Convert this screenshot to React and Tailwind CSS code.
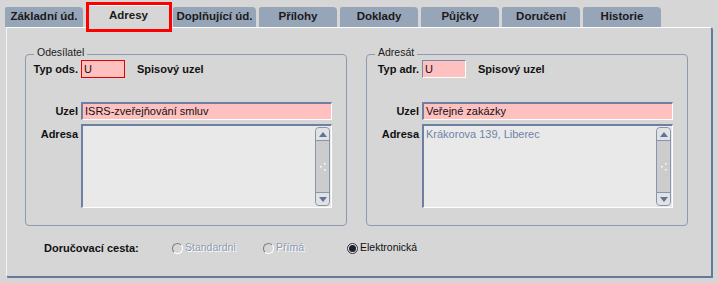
import React from 'react'

const tabs = [
  { label: 'Základní úd.', w: 'w-[78px]' },
  { label: 'Adresy', w: 'w-[84px]', active: true },
  { label: 'Doplňující úd.', w: 'w-[83px]' },
  { label: 'Přílohy', w: 'w-[78px]' },
  { label: 'Doklady', w: 'w-[78px]' },
  { label: 'Půjčky', w: 'w-[78px]' },
  { label: 'Doručení', w: 'w-[78px]' },
  { label: 'Historie', w: 'w-[78px]' },
]

function Tab({ label, w, active }) {
  if (active) {
    return (
      <div className={`${w} h-[23px] -mb-[1px] pb-[2px] flex items-center justify-center bg-[#d6d6d6] border-t border-l border-white rounded-t-[3px] text-[11.5px] font-bold text-[#1a1a1a] relative z-10`}>
        {label}
      </div>
    )
  }
  return (
    <div className={`${w} h-[20px] flex items-center justify-center bg-[#97a5b8] rounded-tr-[4px] rounded-tl-[2px] text-[11.5px] font-bold text-[#1a1a1a]`}>
      {label}
    </div>
  )
}

// svislý posuvník textového pole
function ScrollBar() {
  return (
    <div className="w-[15px] h-full flex flex-col border border-[#8595b0] rounded-[4px] bg-[#cfcfcf] overflow-hidden">
      <div className="h-[13px] flex items-center justify-center bg-[#e2e2e2] border-b border-[#8595b0] rounded-t-[3px]">
        <svg width="8" height="5" viewBox="0 0 8 5"><path d="M0 5 L4 0 L8 5 Z" fill="#5f7498" /></svg>
      </div>
      <div className="flex-1 flex items-center justify-center bg-[#cccccc]">
        <svg width="6" height="8" viewBox="0 0 6 8">
          <rect x="4" y="0" width="1.5" height="1.5" fill="#fff" />
          <rect x="0" y="3" width="1.5" height="1.5" fill="#fff" />
          <rect x="4" y="6" width="1.5" height="1.5" fill="#fff" />
        </svg>
      </div>
      <div className="h-[13px] flex items-center justify-center bg-[#e2e2e2] border-t border-[#8595b0] rounded-b-[3px]">
        <svg width="8" height="5" viewBox="0 0 8 5"><path d="M0 0 L8 0 L4 5 Z" fill="#5f7498" /></svg>
      </div>
    </div>
  )
}

function AddressBox({ title, typLabel, typRed, uzel, adresa }) {
  return (
    <div className="relative w-[322px] h-[172px] border border-[#8d9bb0] rounded-[4px] pt-[5px]">
      <span className="absolute -top-[10px] left-[8px] px-[3px] bg-[#d6d6d6] text-[10.5px] leading-[14px] text-[#1a1a1a]">
        {title}
      </span>
      <div className="flex items-center h-[18px]">
        <div className="w-[52px] text-right text-[11px] font-bold text-[#111]">{typLabel}</div>
        <div
          className={`ml-[3px] w-[44px] h-[18px] bg-[#ffc0c0] text-[11px] leading-[16px] pl-[2px] text-[#111] ${
            typRed ? 'border border-[#e00000]' : 'border border-t-[#7788a6] border-l-[#7788a6] border-b-white border-r-white'
          }`}
        >
          U
        </div>
        <div className="ml-[12px] text-[11px] font-bold text-[#111]">Spisový uzel</div>
      </div>
      <div className="flex items-center h-[18px] mt-[24px]">
        <div className="w-[52px] text-right text-[11px] font-bold text-[#111]">Uzel</div>
        <div className="ml-[3px] w-[251px] h-[18px] bg-[#ffc0c0] border-t-2 border-l-2 border-b border-r border-t-[#6d80a2] border-l-[#6d80a2] border-b-white border-r-white text-[11px] leading-[14px] pl-[2px] text-[#111]">
          {uzel}
        </div>
      </div>
      <div className="flex items-start mt-[4px]">
        <div className="w-[52px] text-right text-[11px] font-bold text-[#111] mt-[2px]">Adresa</div>
        <div className="ml-[3px] w-[251px] h-[84px] flex bg-[#e9e9e9] border-t-2 border-l-2 border-b border-r border-t-[#6d80a2] border-l-[#6d80a2] border-b-white border-r-white">
          <div className="flex-1 text-[11px] leading-[15px] pl-[2px] pt-[1px] text-[#6f83a8]">{adresa}</div>
          <div className="py-[1px] pr-[1px]">
            <ScrollBar />
          </div>
        </div>
      </div>
    </div>
  )
}

function Radio({ label, checked, disabled, w }) {
  return (
    <div className={`${w} flex items-center`}>
      <div
        className={`w-[11px] h-[11px] rounded-full flex items-center justify-center border ${
          checked
            ? 'border-[#2a2d3a] bg-[#e8e8e8]'
            : 'border-t-[#7b7b7b] border-l-[#7b7b7b] border-b-white border-r-white bg-[#d6d6d6]'
        }`}
      >
        {checked && <div className="w-[7px] h-[7px] rounded-full bg-[#1c1f2c]" />}
      </div>
      <span
        className={`ml-[2px] text-[10.5px] ${
          disabled ? 'text-[#8d9bb2] [text-shadow:1px_1px_0_#ffffff]' : 'text-[#111]'
        }`}
      >
        {label}
      </span>
    </div>
  )
}

export default function App() {
  return (
    <div className="relative w-[718px] h-[283px] bg-[#d6d6d6] overflow-hidden font-[family-name:Liberation_Sans,Arial,sans-serif]">
      {/* záložky */}
      <div className="flex items-end gap-[3px] pl-[5px] h-[27px]">
        {tabs.map((t) => (
          <Tab key={t.label} {...t} />
        ))}
      </div>

      {/* zvýraznění vybrané záložky */}
      <div className="absolute left-[86px] top-[2px] w-[86px] h-[30px] border-[3px] border-[#ff0000] z-20" />

      {/* panel */}
      <div className="ml-[6px] w-[707px] h-[251px] border-t border-l border-t-white border-l-[#f2f2f2] border-r-2 border-b-2 border-r-[#66799a] border-b-[#66799a] rounded-bl-[3px] rounded-tr-[3px] pl-[18px] pt-[26px]">
        <div className="flex gap-[19px]">
          <AddressBox title="Odesílatel" typLabel="Typ ods." typRed uzel="ISRS-zveřejňování smluv" adresa="" />
          <AddressBox title="Adresát" typLabel="Typ adr." uzel="Veřejné zakázky" adresa="Krákorova 139, Liberec" />
        </div>

        <div className="flex items-center h-[16px] mt-[14px] pl-[19px]">
          <div className="w-[128px] text-[11px] font-bold text-[#111]">Doručovací cesta:</div>
          <Radio label="Standardni" disabled w="w-[91px]" />
          <Radio label="Přímá" disabled w="w-[84px]" />
          <Radio label="Elektronická" checked w="w-[120px]" />
        </div>
      </div>
    </div>
  )
}
